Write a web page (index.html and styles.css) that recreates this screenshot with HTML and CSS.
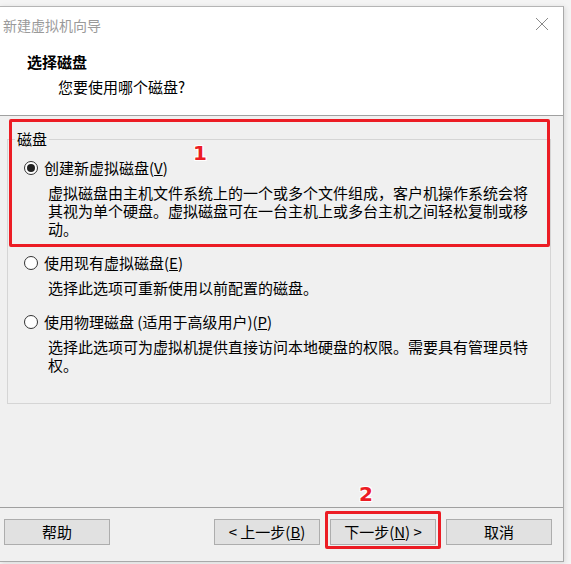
FILE: index.html
```html
<!DOCTYPE html>
<html lang="zh-CN">
<head>
<meta charset="utf-8">
<title>新建虚拟机向导</title>
<link rel="stylesheet" href="styles.css">
</head>
<body>
<div class="window">
  <div class="header">
    <div class="titlebar">
      <span class="title">新建虚拟机向导</span>
      <svg class="close" width="14" height="14" viewBox="0 0 14 14"><path d="M1 1 L13 13 M13 1 L1 13" stroke="#8a8a8a" stroke-width="1" fill="none"/></svg>
    </div>
    <div class="h-title">选择磁盘</div>
    <div class="h-sub">您要使用哪个磁盘?</div>
  </div>
  <div class="content">
    <fieldset class="group">
      <legend class="legend">磁盘</legend>
      <div class="option">
        <div class="radio-row"><span class="radio checked"></span><span class="opt-label">创建新虚拟磁盘(<u>V</u>)</span></div>
        <div class="desc"><span class="line">虚拟磁盘由主机文件系统上的一个或多个文件组成，客户机操作系统会将</span><span class="line">其视为单个硬盘。虚拟磁盘可在一台主机上或多台主机之间轻松复制或移</span><span class="line">动。</span></div>
      </div>
      <div class="option">
        <div class="radio-row"><span class="radio"></span><span class="opt-label">使用现有虚拟磁盘(<u>E</u>)</span></div>
        <div class="desc"><span class="line">选择此选项可重新使用以前配置的磁盘。</span></div>
      </div>
      <div class="option">
        <div class="radio-row"><span class="radio"></span><span class="opt-label">使用物理磁盘 (适用于高级用户)(<u>P</u>)</span></div>
        <div class="desc"><span class="line">选择此选项可为虚拟机提供直接访问本地硬盘的权限。需要具有管理员特</span><span class="line">权。</span></div>
      </div>
    </fieldset>
  </div>
  <div class="footer">
    <button class="btn">帮助</button>
    <div class="spacer"></div>
    <button class="btn">&lt; 上一步(<u>B</u>)</button>
    <button class="btn">下一步(<u>N</u>) &gt;</button>
    <button class="btn">取消</button>
  </div>
  <div class="mark mark-box1"></div>
  <div class="mark-num num1">1</div>
  <div class="mark mark-box2"></div>
  <div class="mark-num num2">2</div>
</div>
</body>
</html>
```
FILE: styles.css
```css
* { box-sizing: border-box; }
html, body { margin: 0; padding: 0; }
body {
  background: #f4f4f4;
  font-family: "Noto Sans CJK SC", "Microsoft YaHei", sans-serif;
  font-size: 15px;
  color: #000;
  width: 571px;
  height: 564px;
  overflow: hidden;
}
.window {
  position: relative;
  margin-top: 6px;
  width: 564px;
  height: 556px;
  background: #f0f0f0;
  border-top: 1px solid #b5b5b5;
  border-right: 1px solid #a9a9a9;
  border-bottom: 1px solid #a9a9a9;
  box-shadow: 1px 1px 5px rgba(0,0,0,0.12);
  display: flex;
  flex-direction: column;
}
.header {
  background: #fff;
  height: 109px;
  border-bottom: 1px solid #a0a0a0;
  padding-top: 8px;
}
.titlebar {
  display: flex;
  align-items: center;
  justify-content: space-between;
  height: 20px;
  padding-left: 3px;
  padding-right: 14px;
}
.title {
  font-size: 14px;
  line-height: 20px;
  color: #9a9a9a;
}
.close { display: block; margin-top: -3px; }
.h-title {
  margin-top: 18px;
  padding-left: 27px;
  font-weight: bold;
  line-height: 18px;
}
.h-sub {
  margin-top: 7px;
  padding-left: 58px;
  line-height: 18px;
}
.content {
  height: 391px;
  padding: 14px 12px 0 7px;
}
.group {
  margin: 0;
  width: 544px;
  border: 1px solid #d5d5d5;
  padding: 11px 0 29px 0;
  min-width: 0;
}
.legend {
  margin-left: 7px;
  padding: 0 2px;
  line-height: 18px;
}
.option + .option { margin-top: 16px; }
.radio-row {
  display: flex;
  align-items: center;
  padding-left: 16px;
  height: 18px;
}
.radio {
  width: 14px;
  height: 14px;
  border: 1px solid #333;
  border-radius: 50%;
  background: #fff;
  position: relative;
  flex: none;
}
.radio.checked::after {
  content: "";
  position: absolute;
  left: 2px;
  top: 2px;
  width: 8px;
  height: 8px;
  border-radius: 50%;
  background: #222;
}
.opt-label {
  margin-left: 6px;
  line-height: 18px;
  white-space: nowrap;
}
.desc {
  margin-top: 7px;
  padding-left: 40px;
  white-space: nowrap;
}
.line {
  display: block;
  height: 18px;
  line-height: 18px;
}
.footer {
  border-top: 1px solid #a0a0a0;
  flex: 1;
  display: flex;
  align-items: flex-start;
  gap: 10px;
  padding: 11px 11px 0 4px;
}
.spacer { flex: 1; }
.btn {
  width: 106px;
  height: 26px;
  background: #e1e1e1;
  border: 1px solid #adadad;
  font-family: inherit;
  font-size: 15px;
  color: #000;
  padding: 0;
  line-height: 22px;
}
.mark {
  position: absolute;
  border: 3px solid #ec1c24;
  border-radius: 2px;
}
.mark-box1 { left: 9px; top: 112px; width: 541px; height: 128px; }
.mark-box2 { left: 325px; top: 504px; width: 116px; height: 38px; }
.mark-num {
  position: absolute;
  font-family: "DejaVu Sans", "Liberation Sans", sans-serif;
  font-weight: bold;
  font-size: 20px;
  line-height: 20px;
  color: #ec1c24;
  text-shadow: -1px -1px 0 #fff, 1px -1px 0 #fff, -1px 1px 0 #fff, 1px 1px 0 #fff, 0 0 2px #fff;
}
.num1 { left: 193px; top: 136px; }
.num2 { left: 359px; top: 477px; }
```
